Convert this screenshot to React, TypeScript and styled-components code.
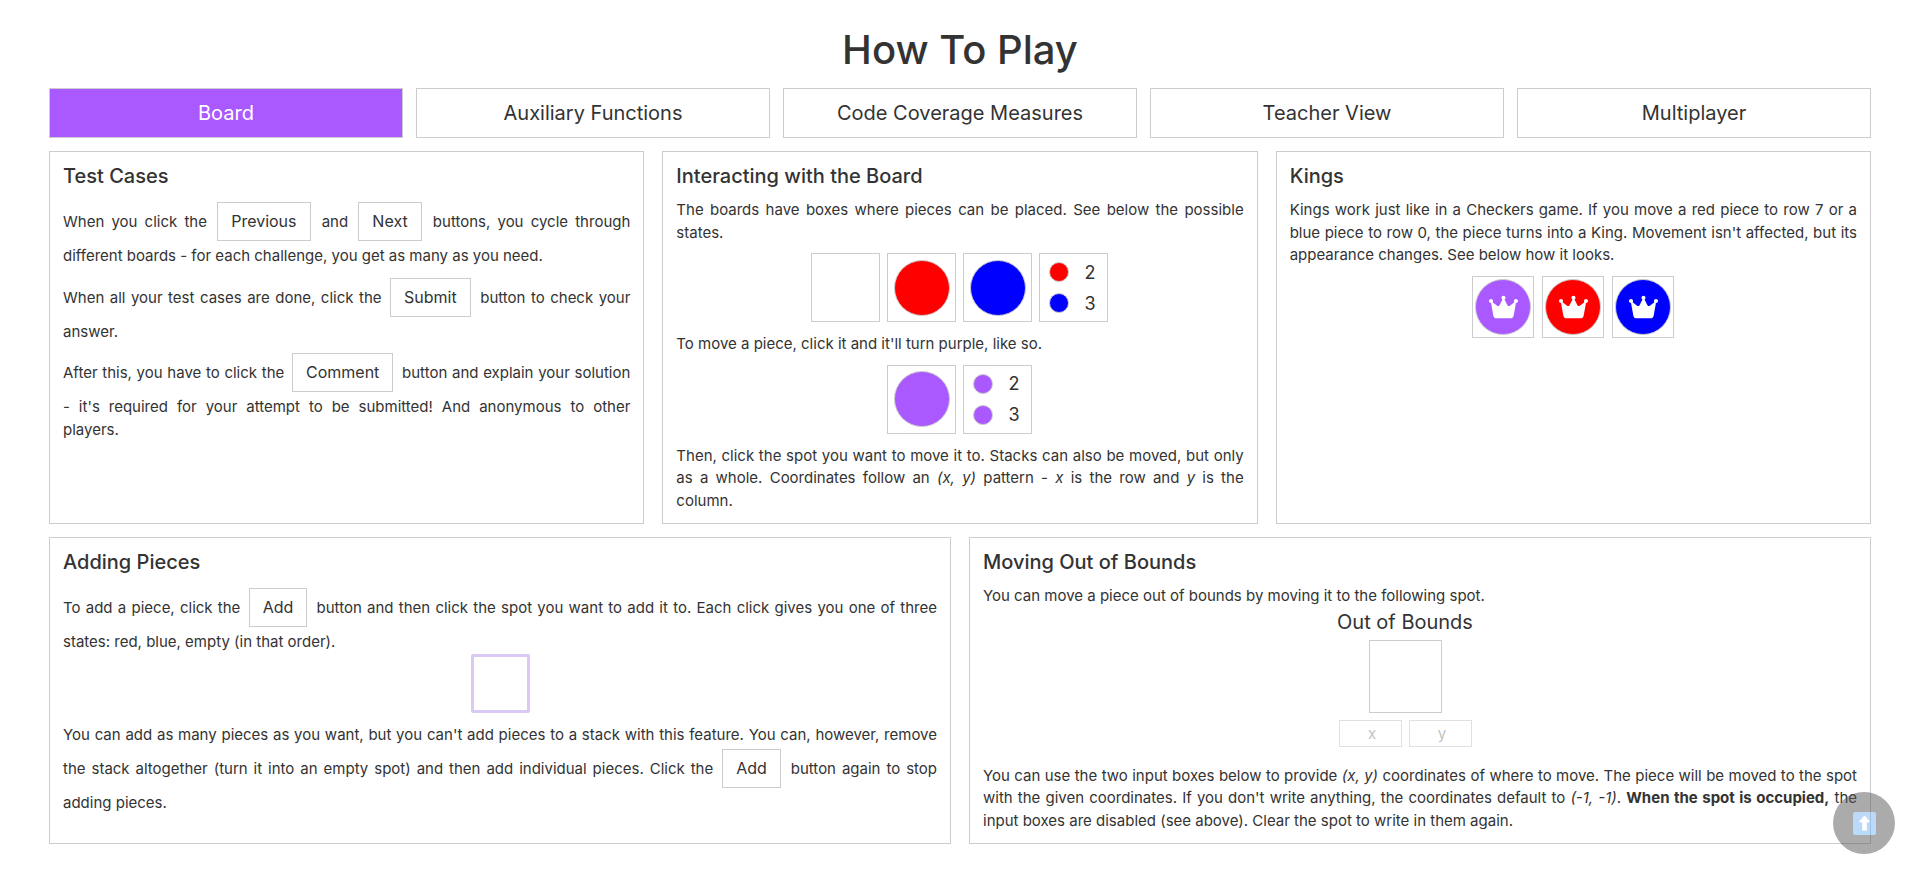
import React, { useState } from "react";
import styled, { createGlobalStyle, css } from "styled-components";
import { FaCrown } from "react-icons/fa6";

const colors = {
  text: "#333333",
  border: "#cccccc",
  purple: "#a959ff",
  red: "#ff0000",
  blue: "#0000ff",
};

const GlobalStyle = createGlobalStyle`
  *, *::before, *::after { box-sizing: border-box; }
  body {
    margin: 0;
    background: #ffffff;
    color: ${colors.text};
    font-family: Inter, sans-serif;
    font-size: 15px;
    line-height: 1.5;
  }
  button, input { font-family: inherit; color: inherit; }
`;

const Page = styled.main`
  display: flex;
  flex-direction: column;
  gap: 13px;
  padding: 24px 49px 33px;
`;

const PageTitle = styled.h1`
  margin: 0;
  font-size: 40px;
  line-height: 51px;
  font-weight: 500;
  text-align: center;
`;

const TabBar = styled.nav`
  display: grid;
  grid-template-columns: repeat(5, 1fr);
  gap: 13px;
`;

const Tab = styled.button<{ $active: boolean }>`
  height: 50px;
  padding: 0 12px;
  border: 1px solid ${colors.border};
  background: ${(p) => (p.$active ? colors.purple : "#ffffff")};
  color: ${(p) => (p.$active ? "#ffffff" : colors.text)};
  font-size: 20px;
  cursor: pointer;
`;

const CardRow = styled.div<{ $columns: number }>`
  display: grid;
  grid-template-columns: repeat(${(p) => p.$columns}, 1fr);
  gap: 18px;
`;

const Card = styled.section`
  display: flex;
  flex-direction: column;
  padding: 12px 13px 11px;
  border: 1px solid ${colors.border};
`;

const CardTitle = styled.h2`
  margin: 0 0 11px;
  font-size: 20px;
  line-height: 24px;
  font-weight: 500;
`;

const Text = styled.p`
  margin: 0;
  text-align: justify;

  & + & {
    margin-top: 7px;
  }
`;

const InlineButton = styled.button`
  margin: 3px 4px 4px 3px;
  padding: 9px 13px;
  border: 1px solid ${colors.border};
  background: #ffffff;
  font-size: 16px;
  line-height: 19px;
  cursor: pointer;
`;

const Pieces = styled.div<{ $gap: number }>`
  display: flex;
  justify-content: center;
  gap: ${(p) => p.$gap}px;
  margin: 9px 0 11px;
`;

const Spot = styled.div<{ $size: number }>`
  display: flex;
  flex-direction: column;
  align-items: center;
  justify-content: center;
  width: ${(p) => p.$size}px;
  height: ${(p) => p.$size}px;
  border: 1px solid ${colors.border};
`;

const Piece = styled.span<{ $color: string; $small?: boolean }>`
  display: flex;
  align-items: center;
  justify-content: center;
  border: 1px solid ${colors.border};
  border-radius: 50%;
  background: ${(p) => p.$color};
  color: #ffffff;
  ${(p) =>
    p.$small
      ? css`
          width: 20px;
          height: 20px;
        `
      : css`
          width: 56px;
          height: 56px;
        `}

  svg {
    width: 29px;
    height: 26px;
  }
`;

const StackRow = styled.div`
  display: flex;
  align-items: center;
  gap: 15px;
  height: 31px;
  padding-right: 3px;
  font-size: 18px;
`;

const AddPreview = styled.div`
  display: flex;
  justify-content: center;
  margin-bottom: 11px;
`;

const AddSpot = styled.div`
  width: 59px;
  height: 59px;
  border: 3px solid #dac9f2;
  border-radius: 2px;
`;

const OutOfBounds = styled.div`
  display: flex;
  flex-direction: column;
  align-items: center;
  margin-bottom: 18px;
  padding-right: 30px;
`;

const OutLabel = styled.h3`
  margin: 0 0 4px;
  font-size: 20px;
  line-height: 28px;
  font-weight: 400;
`;

const Coordinates = styled.div`
  display: flex;
  gap: 7px;
  margin-top: 7px;
`;

const CoordinateInput = styled.input`
  width: 63px;
  height: 27px;
  padding: 0 0 0 4px;
  border: 1px solid ${colors.border};
  background: #ffffff;
  font-size: 15px;
  text-align: center;
  opacity: 0.6;

  &::placeholder {
    color: #999999;
    opacity: 1;
  }
`;

const ScrollTop = styled.button`
  position: fixed;
  right: 25px;
  bottom: 24px;
  display: flex;
  align-items: center;
  justify-content: center;
  width: 62px;
  height: 62px;
  padding: 0;
  border: 0;
  border-radius: 50%;
  background: #595959;
  opacity: 0.5;
  cursor: pointer;
`;

const tabs = [
  "Board",
  "Auxiliary Functions",
  "Code Coverage Measures",
  "Teacher View",
  "Multiplayer",
];

function Stack({ top, bottom }: { top: string; bottom: string }) {
  return (
    <Spot $size={69}>
      <StackRow>
        <Piece $color={top} $small />2
      </StackRow>
      <StackRow>
        <Piece $color={bottom} $small />3
      </StackRow>
    </Spot>
  );
}

function ArrowUp() {
  return (
    <svg width="23" height="23" viewBox="0 0 23 23" aria-hidden="true">
      <defs>
        <linearGradient id="tile" x1="0" y1="0" x2="0" y2="1">
          <stop offset="0" stopColor="#7fb0f0" />
          <stop offset="1" stopColor="#74b8fb" />
        </linearGradient>
      </defs>
      <rect width="23" height="23" rx="2" fill="url(#tile)" />
      <path
        d="M11.5 4.5 16 9.5H13.1V18H9.9V9.5H7Z"
        fill="#ffffff"
        stroke="#ffffff"
        strokeWidth="1.4"
        strokeLinejoin="round"
      />
    </svg>
  );
}

export default function App() {
  const [active, setActive] = useState(tabs[0]);

  return (
    <>
      <GlobalStyle />
      <Page>
        <PageTitle>How To Play</PageTitle>
        <TabBar>
          {tabs.map((tab) => (
            <Tab key={tab} $active={tab === active} onClick={() => setActive(tab)}>
              {tab}
            </Tab>
          ))}
        </TabBar>

        <CardRow $columns={3}>
          <Card>
            <CardTitle>Test Cases</CardTitle>
            <Text>
              When you click the <InlineButton>Previous</InlineButton> and{" "}
              <InlineButton>Next</InlineButton> buttons, you cycle through different
              boards - for each challenge, you get as many as you need.
            </Text>
            <Text>
              When all your test cases are done, click the{" "}
              <InlineButton>Submit</InlineButton> button to check your answer.
            </Text>
            <Text>
              After this, you have to click the <InlineButton>Comment</InlineButton>{" "}
              button and explain your solution - it's required for your attempt to be
              submitted! And anonymous to other players.
            </Text>
          </Card>

          <Card>
            <CardTitle>Interacting with the Board</CardTitle>
            <Text>
              The boards have boxes where pieces can be placed. See below the possible
              states.
            </Text>
            <Pieces $gap={7}>
              <Spot $size={69} />
              <Spot $size={69}>
                <Piece $color={colors.red} />
              </Spot>
              <Spot $size={69}>
                <Piece $color={colors.blue} />
              </Spot>
              <Stack top={colors.red} bottom={colors.blue} />
            </Pieces>
            <Text>To move a piece, click it and it'll turn purple, like so.</Text>
            <Pieces $gap={7}>
              <Spot $size={69}>
                <Piece $color={colors.purple} />
              </Spot>
              <Stack top={colors.purple} bottom={colors.purple} />
            </Pieces>
            <Text>
              Then, click the spot you want to move it to. Stacks can also be moved, but
              only as a whole. Coordinates follow an <em>(x, y)</em> pattern -{" "}
              <em>x</em> is the row and <em>y</em> is the column.
            </Text>
          </Card>

          <Card>
            <CardTitle>Kings</CardTitle>
            <Text>
              Kings work just like in a Checkers game. If you move a red piece to row 7
              or a blue piece to row 0, the piece turns into a King. Movement isn't
              affected, but its appearance changes. See below how it looks.
            </Text>
            <Pieces $gap={8}>
              {[colors.purple, colors.red, colors.blue].map((color) => (
                <Spot key={color} $size={62}>
                  <Piece $color={color}>
                    <FaCrown />
                  </Piece>
                </Spot>
              ))}
            </Pieces>
          </Card>
        </CardRow>

        <CardRow $columns={2}>
          <Card>
            <CardTitle>Adding Pieces</CardTitle>
            <Text>
              To add a piece, click the <InlineButton>Add</InlineButton> button and then
              click the spot you want to add it to. Each click gives you one of three
              states: red, blue, empty (in that order).
            </Text>
            <AddPreview>
              <AddSpot />
            </AddPreview>
            <Text>
              You can add as many pieces as you want, but you can't add pieces to a stack
              with this feature. You can, however, remove the stack altogether (turn it
              into an empty spot) and then add individual pieces. Click the{" "}
              <InlineButton>Add</InlineButton> button again to stop adding pieces.
            </Text>
          </Card>

          <Card>
            <CardTitle>Moving Out of Bounds</CardTitle>
            <Text>
              You can move a piece out of bounds by moving it to the following spot.
            </Text>
            <OutOfBounds>
              <OutLabel>Out of Bounds</OutLabel>
              <Spot $size={73} />
              <Coordinates>
                <CoordinateInput placeholder="x" aria-label="x coordinate" disabled />
                <CoordinateInput placeholder="y" aria-label="y coordinate" disabled />
              </Coordinates>
            </OutOfBounds>
            <Text>
              You can use the two input boxes below to provide <em>(x, y)</em>{" "}
              coordinates of where to move. The piece will be moved to the spot with the
              given coordinates. If you don't write anything, the coordinates default to{" "}
              <em>(-1, -1)</em>. <strong>When the spot is occupied,</strong> the input
              boxes are disabled (see above). Clear the spot to write in them again.
            </Text>
          </Card>
        </CardRow>
      </Page>
      <ScrollTop
        aria-label="Scroll to top"
        onClick={() => window.scrollTo({ top: 0, behavior: "smooth" })}
      >
        <ArrowUp />
      </ScrollTop>
    </>
  );
}
